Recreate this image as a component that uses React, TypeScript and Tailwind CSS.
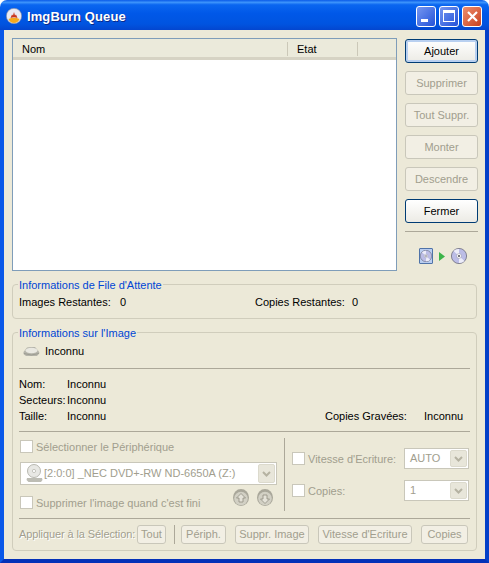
import React from 'react';

const font = { fontFamily: '"Liberation Sans", sans-serif' };

const SideButton: React.FC<{ label: string; active?: boolean; focus?: boolean }> = ({ label, active, focus }) => (
  <div
    className={
      active
        ? `h-[24px] w-[73px] flex items-center justify-center rounded-[3px] border border-[#003c74] bg-gradient-to-b from-white to-[#ecebe5] text-black ${focus ? 'shadow-[inset_0_0_0_2px_#b9d0f0]' : ''}`
        : 'h-[24px] w-[73px] flex items-center justify-center rounded-[3px] border border-[#c9c7ba] bg-[#f2efe4] text-[#a19e8e]'
    }
  >
    {label}
  </div>
);

const SmallButton: React.FC<{ label: string; w: string }> = ({ label, w }) => (
  <div className={`${w} h-[19px] shrink-0 whitespace-nowrap flex items-center justify-center rounded-[3px] border border-[#c9c7ba] bg-[#f2efe4] text-[#a19e8e]`}>
    {label}
  </div>
);

const Check: React.FC<{ label: string }> = ({ label }) => (
  <div className="flex items-start gap-[3px] text-[#a19e8e] whitespace-nowrap">
    <div className="w-[13px] h-[13px] border border-[#c9c7ba] bg-white" />
    <span className="pt-px">{label}</span>
  </div>
);

const Arrow: React.FC = () => (
  <div className="w-[17px] h-full shrink-0 flex items-center justify-center bg-[#e8e6da] border border-[#dcdacd] rounded-[2px]">
    <svg width="9" height="6" viewBox="0 0 9 6"><path d="M1 1l3.500 3.500L8 1" fill="none" stroke="#b5b2a2" strokeWidth="2" /></svg>
  </div>
);

const Combo: React.FC<{ w: string; h: string; children: React.ReactNode }> = ({ w, h, children }) => (
  <div className={`${w} ${h} flex items-center justify-between border border-[#c9c7ba] bg-white p-px text-[#a19e8e]`}>
    <div className="flex items-center pl-[4px] min-w-0">{children}</div>
    <Arrow />
  </div>
);

const Disc: React.FC<{ size: number }> = ({ size }) => (
  <svg width={size} height={size} viewBox="0 0 16 16">
    <circle cx="8" cy="8" r="7.600" fill="#bcbde6" stroke="#5f5f70" strokeWidth="0.700" />
    <path d="M8 8L2.500 3A7 7 0 0 1 8 1zM8 8l5.500 5A7 7 0 0 1 8 15z" fill="#f2f2fb" opacity="0.900" />
    <circle cx="8" cy="8" r="2.400" fill="#fff" stroke="#8a8a9c" strokeWidth="0.500" />
    <circle cx="8" cy="8" r="1" fill="#4a4a55" />
  </svg>
);

const RoundArrow: React.FC<{ up?: boolean }> = ({ up }) => (
  <svg width="16" height="17" viewBox="0 0 16 17">
    <ellipse cx="8" cy="8.500" rx="8" ry="8.500" fill="#a9a79a" />
    <ellipse cx="8" cy="9.500" rx="6.800" ry="6.800" fill="#d2d0c4" />
    <path
      d={up ? 'M8 4.500l4.500 4.500H10v4H6V9H3.500z' : 'M8 14.500L3.500 10H6V6h4v4h2.500z'}
      fill="#e4e2d8"
      stroke="#8f8d80"
      strokeWidth="0.800"
    />
  </svg>
);

export default function App() {
  return (
    <div className="w-[489px] h-[563px] flex flex-col overflow-hidden text-[11px] leading-[13px] text-black bg-white" style={font}>
      {/* title bar */}
      <div className="h-[30px] shrink-0 flex items-center justify-between pl-[6px] pr-[7px] pt-[2px] rounded-t-[7px] bg-[linear-gradient(to_bottom,#0a5be8_0%,#3c93fb_8%,#0a66f0_16%,#0058e8_45%,#0054e0_80%,#0346cf_100%)]">
        <div className="flex items-center gap-[5px]">
          <svg width="16" height="16" viewBox="0 0 16 16">
            <circle cx="8" cy="8" r="7.700" fill="#e9eaf2" stroke="#77809c" strokeWidth="0.600" />
            <path d="M2.500 11Q8 8.500 13.500 11Q12 15 8 15Q4 15 2.500 11z" fill="#f5a91d" />
            <path d="M4.500 10L6 6.500l1 1L8 4l1 3.500 1-1 1.500 3.500Q8 8.500 4.500 10z" fill="#c9361b" />
          </svg>
          <span className="text-white font-bold text-[13px] tracking-[0.1px] [text-shadow:1px_1px_0_#0a2a8a]">ImgBurn Queue</span>
        </div>
        <div className="flex items-center gap-[3px]">
          <div className="w-[20px] h-[21px] rounded-[3px] border border-white bg-gradient-to-br from-[#7696f0] to-[#2450d8] flex items-end pl-[4px] pb-[4px]">
            <div className="w-[7px] h-[3px] bg-white" />
          </div>
          <div className="w-[20px] h-[21px] rounded-[3px] border border-white bg-gradient-to-br from-[#7696f0] to-[#2450d8] flex items-center justify-center">
            <div className="w-[12px] h-[12px] border border-white border-t-[3px]" />
          </div>
          <div className="w-[20px] h-[21px] rounded-[3px] border border-white bg-gradient-to-br from-[#ee8d6c] to-[#c8401c] flex items-center justify-center">
            <svg width="11" height="11" viewBox="0 0 11 11"><path d="M1 1l9 9M10 1l-9 9" stroke="#fff" strokeWidth="2.200" /></svg>
          </div>
        </div>
      </div>

      {/* client area */}
      <div className="flex-1 border-x-4 border-b-4 border-l-[#0a58e8] border-r-[#0340c8] border-b-[#0431b8] bg-[#ece9d8] px-[8px] pt-[8px] flex flex-col">
        <div className="flex">
          <div className="w-[385px] h-[233px] shrink-0 border border-[#7f9db9] bg-white flex flex-col">
            <div className="h-[21px] flex items-center bg-[#ebeadb] border-b-[3px] border-[#d6d3c4] pt-[2px]">
              <div className="w-[274px] pl-[9px]">Nom</div>
              <div className="w-px h-[14px] bg-[#cbc8b8]" />
              <div className="w-[69px] pl-[9px]">Etat</div>
              <div className="w-px h-[14px] bg-[#cbc8b8]" />
            </div>
          </div>
          <div className="ml-[8px] mt-[1px] shrink-0 flex flex-col gap-[8px]">
            <SideButton label="Ajouter" active focus />
            <SideButton label="Supprimer" />
            <SideButton label="Tout Suppr." />
            <SideButton label="Monter" />
            <SideButton label="Descendre" />
            <SideButton label="Fermer" active />
            <div className="h-px bg-[#aca899]" />
            <div className="flex items-center gap-[6px] mt-[8px] pl-[14px]">
              <div className="w-[14px] h-[16px] bg-[#b9cdf0] border border-[#4f73a8] flex items-center justify-center rounded-[1px]">
                <Disc size={12} />
              </div>
              <svg width="6" height="9" viewBox="0 0 6 9"><path d="M0 0l6 4.500L0 9z" fill="#3cb44a" /></svg>
              <Disc size={16} />
            </div>
          </div>
        </div>

        {/* queue info */}
        <div className="relative mt-[13px] h-[35px] border border-[#d0cdbc] rounded-[4px] flex items-center pl-[6px] pt-px">
          <span className="absolute -top-[6px] left-[5px] px-px bg-[#ece9d8] text-[#0046d5]">Informations de File d'Attente</span>
          <span className="w-[101px]">Images Restantes:</span>
          <span className="w-[135px]">0</span>
          <span className="w-[97px]">Copies Restantes:</span>
          <span>0</span>
        </div>

        {/* image info */}
        <div className="relative mt-[13px] h-[219px] border border-[#d0cdbc] rounded-[4px] px-[6px] flex flex-col">
          <span className="absolute -top-[6px] left-[5px] px-px bg-[#ece9d8] text-[#0046d5]">Informations sur l'Image</span>
          <div className="h-[36px] shrink-0 flex items-center pl-[4px] pt-px gap-[5px] border-b border-[#aca899]">
            <svg width="17" height="11" viewBox="0 0 17 11">
              <path d="M0.500 6L4 1.500Q5 1 8 1h4l3.500 4L16.500 7 14 10H3L0.500 8z" fill="#b5b4aa" />
              <ellipse cx="8.500" cy="4.500" rx="6" ry="2.800" fill="#e9e8e1" />
              <path d="M1 7.500Q8 10.500 16 7.500" fill="none" stroke="#96958c" strokeWidth="0.800" />
            </svg>
            <span>Inconnu</span>
          </div>
          <div className="h-[63px] shrink-0 pt-[9px] border-b border-[#aca899] flex flex-col gap-[3px]">
            <div className="flex"><span className="w-[48px]">Nom:</span><span>Inconnu</span></div>
            <div className="flex"><span className="w-[48px]">Secteurs:</span><span>Inconnu</span></div>
            <div className="flex">
              <span className="w-[48px]">Taille:</span><span className="w-[258px]">Inconnu</span>
              <span className="w-[99px]">Copies Gravées:</span><span>Inconnu</span>
            </div>
          </div>
          <div className="h-[87px] shrink-0 flex items-start border-b border-[#aca899]">
            <div className="w-[265px] shrink-0 pl-px mt-[8px] flex flex-col">
              <Check label="Sélectionner le Périphérique" />
              <div className="mt-[8px]">
                <Combo w="w-[257px]" h="h-[23px]">
                  <svg width="17" height="19" viewBox="0 0 17 19">
                    <circle cx="8" cy="7" r="6.500" fill="#e8e8e4" stroke="#a8a89e" strokeWidth="0.800" />
                    <circle cx="8" cy="7" r="1.600" fill="#fff" stroke="#a8a89e" strokeWidth="0.600" />
                    <path d="M1 14h15l0.500 2-1.500 2H2.500L0.500 16z" fill="#bdbdb4" />
                  </svg>
                  <span className="ml-px whitespace-nowrap">[2:0:0] _NEC DVD+-RW ND-6650A (Z:)</span>
                </Combo>
              </div>
              <div className="flex justify-between items-start mt-[4px] pr-[11px]">
                <div className="mt-[7px]"><Check label="Supprimer l'image quand c'est fini" /></div>
                <div className="flex gap-[8px]"><RoundArrow up /><RoundArrow /></div>
              </div>
            </div>
            <div className="w-px h-[73px] mt-[6px] shrink-0 bg-[#aca899]" />
            <div className="ml-[7px] mt-[16px] flex flex-col gap-[11px]">
              <div className="flex items-center justify-between w-[177px]">
                <Check label="Vitesse d'Ecriture:" />
                <Combo w="w-[65px]" h="h-[21px]"><span>AUTO</span></Combo>
              </div>
              <div className="flex items-center justify-between w-[177px]">
                <Check label="Copies:" />
                <Combo w="w-[65px]" h="h-[21px]"><span>1</span></Combo>
              </div>
            </div>
          </div>
          <div className="flex-1 flex items-center text-[#a19e8e]">
            <span className="w-[118px] shrink-0 whitespace-nowrap tracking-[-0.1px] [text-shadow:1px_1px_0_#fff]">Appliquer à la Sélection:</span>
            <SmallButton label="Tout" w="w-[29px]" />
            <div className="w-px h-[19px] bg-[#aca899] ml-[8px] mr-[6px]" />
            <div className="flex gap-[9px]">
              <SmallButton label="Périph." w="w-[45px]" />
              <SmallButton label="Suppr. Image" w="w-[74px]" />
              <SmallButton label="Vitesse d'Ecriture" w="w-[94px]" />
              <SmallButton label="Copies" w="w-[47px]" />
            </div>
          </div>
        </div>
      </div>
    </div>
  );
}
